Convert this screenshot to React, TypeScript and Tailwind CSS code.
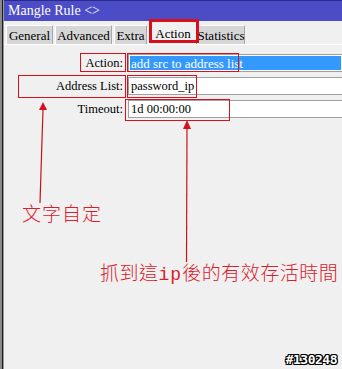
import React from "react";

const Tab = ({ label, w, active }: { label: string; w: string; active?: boolean }) => (
  <div
    className={
      "flex items-center justify-center text-[13px] leading-none text-black " +
      w +
      (active
        ? " h-[23px] bg-[#f0f0f0] border-t border-l border-white border-r border-r-[#9a9a9a]"
        : " h-[19px] bg-[#d6d6d6] border-t border-l border-white border-r border-r-[#a8a8a8]")
    }
  >
    {label}
  </div>
);

const Row = ({ label, value, selected }: { label: string; value: string; selected?: boolean }) => (
  <div className="flex items-center h-[18px]">
    <div className="w-[119px] text-right text-[12.5px] leading-none text-black">{label}</div>
    <div className="w-[5px]" />
    <div className="flex-1 h-full border-t border-b border-l border-[#a0a0a0] bg-white flex items-center px-[1px] text-[12.5px] leading-none text-black">
      {selected ? (
        <span className="bg-[#3399ff] text-white w-full h-[14px] flex items-center pl-[1px] text-[13px]">{value}</span>
      ) : (
        <span className="pl-[1px]">{value}</span>
      )}
    </div>
  </div>
);

export default function App() {
  return (
    <div className="relative w-[342px] h-[369px] bg-[#f0f0f0] flex overflow-hidden font-['Liberation_Serif',serif]">
      <div className="w-[2px] bg-[#8a8a8a]" />
      <div className="w-[1px] bg-[#1a1a1a]" />
      <div className="w-[1px] bg-[#9a9a9a]" />
      <div className="flex-1 flex flex-col">
        <div className="h-[21px] bg-[#4c4cc6] border-t border-[#2a2a8a] flex items-center px-[4px] text-white text-[14px] leading-none">
          Mangle Rule &lt;&gt;
        </div>
        <div className="h-[23px] flex items-end pl-[2px] gap-[2px]">
          <Tab label="General" w="w-[47px]" />
          <Tab label="Advanced" w="w-[57px]" />
          <Tab label="Extra" w="w-[33px]" />
          <Tab label="Action" w="w-[48px]" active />
          <div className="-ml-[2px]">
            <Tab label="Statistics" w="w-[48px]" />
          </div>
        </div>
        <div className="h-px bg-white" />
        <div className="flex flex-col gap-[5px] pt-[9px]">
          <Row label="Action:" value="add src to address list" selected />
          <Row label="Address List:" value="password_ip" />
          <Row label="Timeout:" value="1d 00:00:00" />
        </div>
        <div className="flex-1" />
      </div>

      {/* annotation boxes */}
      <div className="absolute left-[149px] top-[19px] w-[50px] h-[24px] border-[3px] border-[#d8101c]" />
      <div className="absolute left-[80px] top-[53px] w-[46px] h-[19px] border border-[#d8101c]" />
      <div className="absolute left-[127px] top-[53px] w-[112px] h-[19px] border border-[#d8101c]" />
      <div className="absolute left-[18px] top-[75px] w-[108px] h-[23px] border border-[#d8101c]" />
      <div className="absolute left-[127px] top-[75px] w-[70px] h-[23px] border border-[#d8101c]" />
      <div className="absolute left-[125px] top-[99px] w-[105px] h-[22px] border border-[#d8101c]" />

      <svg className="absolute left-0 top-0" width="342" height="369">
        <polygon points="43,102 39,110 47,110" fill="#d8101c" />
        <polyline points="43,110 42,140 40,203" fill="none" stroke="#c81018" strokeWidth="1.2" />
        <polygon points="187,120 183,129 191,129" fill="#d8101c" />
        <line x1="187" y1="129" x2="186.5" y2="262" stroke="#c81018" strokeWidth="1.2" />
      </svg>

      <div className="absolute left-[22px] top-[203px] text-[19px] leading-none font-light text-[#d8202c] font-['Noto_Sans_CJK_TC',sans-serif] tracking-[1px]">
        文字自定
      </div>
      <div className="absolute left-[100px] top-[262px] text-[19px] leading-none font-light text-[#d8202c] font-['Noto_Sans_CJK_TC',sans-serif] tracking-[0.5px]">
        抓到這<span className="font-['Liberation_Mono',monospace] font-normal text-[18px] tracking-[1px]">ip</span>後的有效存活時間
      </div>

      <div
        className="absolute right-[5px] bottom-[3px] text-[13px] leading-none font-bold text-white font-['DejaVu_Sans_Mono',monospace] tracking-[-0.5px]"
        style={{ textShadow: "1px 0 #000, -1px 0 #000, 0 1px #000, 0 -1px #000, 1px 1px #000, -1px -1px #000, 1px -1px #000, -1px 1px #000" }}
      >
        #130248
      </div>
    </div>
  );
}
